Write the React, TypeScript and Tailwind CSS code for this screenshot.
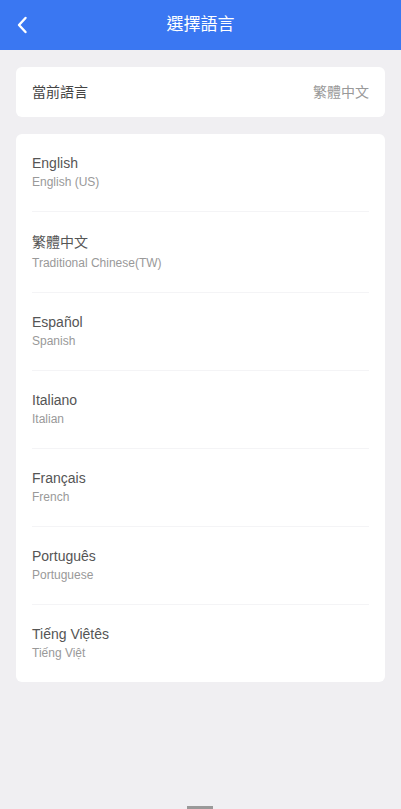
import React from "react";

const langs = [
  { name: "English", sub: "English (US)" },
  { name: "繁體中文", sub: "Traditional Chinese(TW)" },
  { name: "Español", sub: "Spanish" },
  { name: "Italiano", sub: "Italian" },
  { name: "Français", sub: "French" },
  { name: "Português", sub: "Portuguese" },
  { name: "Tiếng Việtês", sub: "Tiếng Việt" },
];

export default function App() {
  return (
    <div
      className="relative w-[401px] h-[809px] bg-[#f0eff2] overflow-hidden"
      style={{ fontFamily: '"Liberation Sans", Arial, "Noto Sans CJK TC", sans-serif' }}
    >
      <header className="relative h-[50px] bg-[#3a77f2] flex items-center justify-center">
        <button className="absolute left-[12px] top-[15px] w-[20px] h-[20px] flex items-center justify-center">
          <svg width="12" height="18" viewBox="0 0 12 18" fill="none">
            <path d="M9.5 2 L3 9 L9.5 16" stroke="white" strokeWidth="2.4" strokeLinecap="round" strokeLinejoin="round" />
          </svg>
        </button>
        <h1 className="text-white text-[17px] leading-[24px]">選擇語言</h1>
      </header>

      <div className="mx-[16px] mt-[17px] h-[50px] bg-white rounded-[6px] px-[16px] flex items-center justify-between">
        <span className="text-[14px] text-[#444]">當前語言</span>
        <span className="text-[14px] text-[#999]">繁體中文</span>
      </div>

      <div className="mx-[16px] mt-[17px] bg-white rounded-[6px] px-[16px]">
        {langs.map((l, i) => (
          <div
            key={l.name}
            className={`pt-[19px] pb-[20px] ${i < langs.length - 1 ? "border-b border-[#f4f4f6]" : ""}`}
          >
            <div className={`text-[14px] text-[#555] ${i === 1 ? "leading-[23px]" : "leading-[20px]"}`}>{l.name}</div>
            <div className="text-[12px] leading-[18px] text-[#999]">{l.sub}</div>
          </div>
        ))}
      </div>

      <div className="absolute bottom-0 left-[187px] w-[26px] h-[3px] bg-[#999]" />
    </div>
  );
}
